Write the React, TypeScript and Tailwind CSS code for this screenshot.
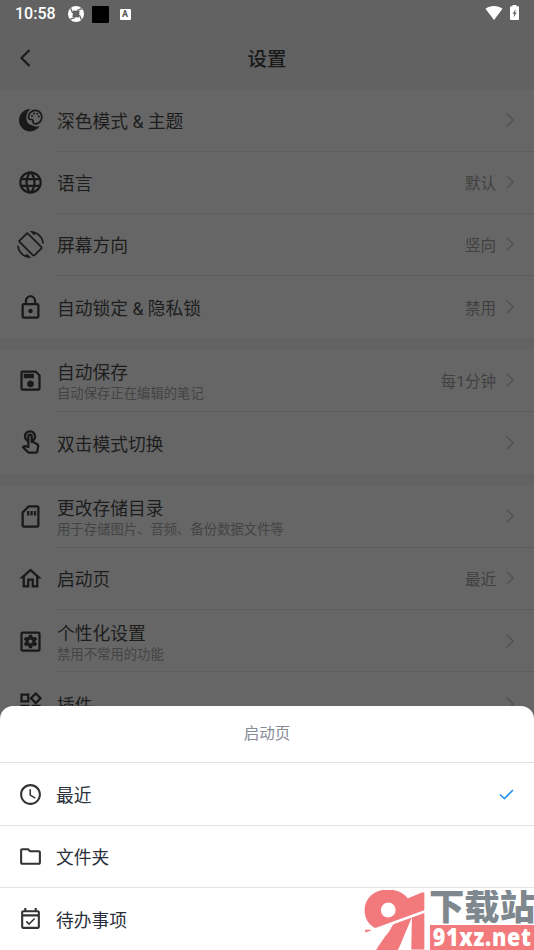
import React from 'react';
import type { ReactNode } from 'react';
import type { IconType } from 'react-icons';
import {
  MdLanguage,
  MdOutlineScreenRotation,
  MdLockOutline,
  MdOutlineSave,
  MdOutlineTouchApp,
  MdOutlineSdCard,
  MdOutlineHome,
  MdOutlineSettingsApplications,
  MdOutlineWidgets,
  MdSchedule,
  MdOutlineFolder,
  MdOutlineEventAvailable,
} from 'react-icons/md';

interface SettingItem {
  icon: IconType | typeof ThemeIcon;
  title: string;
  desc?: string;
  value?: string;
}

function ThemeIcon({ className }: { className?: string }) {
  return (
    <svg viewBox="0 0 27 27" className={className} fill="currentColor">
      <path d="M13.5 2A11.2 11.2 0 1 0 22.6 19.2C20 19.800 17 19.500 15 18.200C10.500 17.500 9 13.500 9.400 10C9.500 6.500 11.200 3.500 13.5 2Z" />
      <path
        d="M18.4 3.4C14.4 3.4 11.5 6.4 11.5 9.9C11.5 11.9 12.6 12.6 14 12.5C15.4 12.4 16.4 13 16.1 14.4C15.8 16 16.8 16.9 18.3 16.9C22 16.9 24.8 13.8 24.8 10.1C24.8 6.3 22 3.4 18.4 3.4Z"
        fill="none"
        stroke="currentColor"
        strokeWidth="1.7"
      />
      <circle cx="15" cy="8.9" r="1" />
      <circle cx="17" cy="6.5" r="1" />
      <circle cx="20.2" cy="6.8" r="1" />
      <circle cx="21.8" cy="9.6" r="1" />
    </svg>
  );
}

const groups: SettingItem[][] = [
  [
    { icon: ThemeIcon, title: '深色模式 & 主题' },
    { icon: MdLanguage, title: '语言', value: '默认' },
    { icon: MdOutlineScreenRotation, title: '屏幕方向', value: '竖向' },
    { icon: MdLockOutline, title: '自动锁定 & 隐私锁', value: '禁用' },
  ],
  [
    { icon: MdOutlineSave, title: '自动保存', desc: '自动保存正在编辑的笔记', value: '每1分钟' },
    { icon: MdOutlineTouchApp, title: '双击模式切换' },
  ],
  [
    { icon: MdOutlineSdCard, title: '更改存储目录', desc: '用于存储图片、音频、备份数据文件等' },
    { icon: MdOutlineHome, title: '启动页', value: '最近' },
    { icon: MdOutlineSettingsApplications, title: '个性化设置', desc: '禁用不常用的功能' },
    { icon: MdOutlineWidgets, title: '插件' },
  ],
];

const options = [
  { icon: MdSchedule, label: '最近', checked: true },
  { icon: MdOutlineFolder, label: '文件夹', checked: false },
  { icon: MdOutlineEventAvailable, label: '待办事项', checked: false },
];

const StatusBar = () => (
  <div className="flex h-7 items-center justify-between pl-[15px] pr-[15px] text-white">
    <div className="flex items-center">
      <span className="w-[41px] whitespace-nowrap text-[16px] font-medium leading-7">10:58</span>
      <svg viewBox="0 0 16 16" className="ml-3 size-4">
        <circle cx="8" cy="8" r="8" fill="#fff" />
        <path d="M5 4.500L11.500 5L11 11.500L4.500 11Z" fill="#626262" />
        <path d="M4.600 7L2.600 2.200M9 4.600L13.800 2.600M11.400 9L13.400 13.800M7 11.400L2.200 13.400" stroke="#626262" strokeWidth="1.300" />
      </svg>
      <div className="ml-2 size-[17px] rounded-[1px] bg-black" />
      <div className="ml-[10.5px] flex size-[11px] items-center justify-center rounded-[1px] bg-white text-[9px] font-bold leading-none text-[#555]">
        A
      </div>
    </div>
    <div className="flex items-center gap-[7px] pb-[3px]">
      <svg viewBox="0 0 18 14" className="h-[14px] w-[18px]">
        <path d="M9 14L0.5 2.8C5.5-.9 12.5-.9 17.5 2.8Z" fill="#fff" />
      </svg>
      <svg viewBox="0 0 9 15" className="h-[15px] w-[9px]">
        <path d="M2.5 0h4v1.2H8q1 0 1 1V14q0 1-1 1H1q-1 0-1-1V2.200q0-1 1-1h1.500z" fill="#fff" />
        <path d="M5.800 4L2.600 8.700h1.600L3.500 12.500L6.700 7.600H5z" fill="#626262" />
      </svg>
    </div>
  </div>
);

const Chevron = () => (
  <svg viewBox="0 0 9 14" className="h-[14px] w-[9px]" fill="none" stroke="#505050" strokeWidth="1.3">
    <path d="M.6 .6L7.200 7L.6 13.400" />
  </svg>
);

const SettingRow = ({ item, last }: { item: SettingItem; last: boolean }) => {
  const Icon = item.icon;
  return (
    <div className={`flex shrink-0 pl-[17px] ${item.desc ? 'h-[62.6px]' : 'h-[62.2px]'}`}>
      <div className="flex w-10 shrink-0 items-center">
        <Icon className="size-[27px] text-[#191919]" />
      </div>
      <div className={`flex grow items-center pr-[19px] ${last ? '' : 'border-b border-[#5d5d5d]'}`}>
        <div className={item.desc ? 'grow pt-1.5' : 'grow pt-1'}>
          <div className={`text-[17.75px] text-[#1d1d1d] ${item.desc ? 'leading-[22px]' : 'leading-6'}`}>{item.title}</div>
          {item.desc && <div className="text-[13.35px] leading-5 text-[#444]">{item.desc}</div>}
        </div>
        {item.value && <span className="mr-2.5 pt-[5px] text-[15.5px] text-[#404040]">{item.value}</span>}
        <Chevron />
      </div>
    </div>
  );
};

const OptionRow = ({ children, checked, last }: { children: ReactNode; checked: boolean; last: boolean }) => (
  <div className={`flex h-[62.5px] items-center pl-[17.5px] pr-5 pt-px ${last ? '' : 'border-b border-[#e4e4e6]'}`}>
    {children}
    {checked && (
      <svg viewBox="0 0 15 11" className="ml-auto h-[11px] w-[15px]" fill="none" stroke="#2a91f0" strokeWidth="1.600">
        <path d="M1 5.500L5.400 9.600L14 1" />
      </svg>
    )}
  </div>
);

const Watermark = () => (
  <svg
    viewBox="0 0 170 60"
    className="absolute bottom-0 right-0 h-[60px] w-[170px]"
    fontFamily="'Noto Sans CJK SC', sans-serif"
    fontWeight="900"
  >
    <g fill="#f2797c" stroke="#f2797c" fontFamily="Inter, 'Liberation Sans', sans-serif" fontWeight="800">
      <text x="-1" y="57" fontSize="75" strokeWidth="3" textLength="52" lengthAdjust="spacingAndGlyphs">9</text>
      <text x="33" y="58" fontSize="76" strokeWidth="3" fontFamily="Roboto, sans-serif" fontWeight="900" textLength="37" lengthAdjust="spacingAndGlyphs">1</text>
    </g>
    {/* slanted cuts across the lower half of the number */}
    <path d="M0 43L31 32L12 60H0ZM48 27L34 60H47Z" fill="#fff" />
    <path d="M31 33L47 27L34 60H12Z" fill="#f2797c" />
    <path d="M7 41L62 21" stroke="#fff" strokeWidth="2.500" />
    <text x="65" y="30" fontSize="36" textLength="106" lengthAdjust="spacingAndGlyphs" fill="#7e888e">下载站</text>
    <rect x="66" y="35" width="104" height="25" fill="#f2797c" />
    <text
      x="80"
      y="56"
      fontSize="25"
      textLength="114"
      transform="scale(.86 1)"
      fontFamily="'Open Sans', sans-serif"
      fontWeight="800"
      fill="#fff"
    >
      91xz.net
    </text>
  </svg>
);

export default function App() {
  return (
    <div className="relative h-[950px] w-[534px] overflow-hidden bg-[#626262] font-[Roboto,'Noto_Sans_CJK_SC',sans-serif]">
      <StatusBar />
      <header className="flex h-[61.5px] items-center px-5 pb-0.5">
        <svg viewBox="0 0 12 18" className="h-[18px] w-3" fill="none" stroke="#191919" strokeWidth="2.200">
          <path d="M9.500 1L1.500 9L9.500 17" />
        </svg>
        <h1 className="grow pr-3 pt-[3px] text-center text-[19.5px] font-medium leading-none text-[#191919]">设置</h1>
      </header>
      <main className="flex flex-col gap-[11px]">
        {groups.map((items, i) => (
          <section key={i} className="bg-[#666]">
            {items.map((item, n) => (
              <SettingRow key={item.title} item={item} last={n === items.length - 1} />
            ))}
          </section>
        ))}
      </main>

      <div className="absolute inset-x-0 bottom-0 h-[244px] rounded-t-[13px] bg-white">
        <div className="flex h-[57px] items-center justify-center border-b border-[#e0e0e2] pt-0.5 text-[15.5px] text-[#868b94]">启动页</div>
        {options.map(({ icon: Icon, label, checked }, i) => (
          <OptionRow key={label} checked={checked} last={i === options.length - 1}>
            <Icon className="mr-[13.5px] size-[25px] text-[#333]" />
            <span className="pt-1 text-[17.75px] text-[#2a303a]">{label}</span>
          </OptionRow>
        ))}
        <Watermark />
      </div>
    </div>
  );
}
